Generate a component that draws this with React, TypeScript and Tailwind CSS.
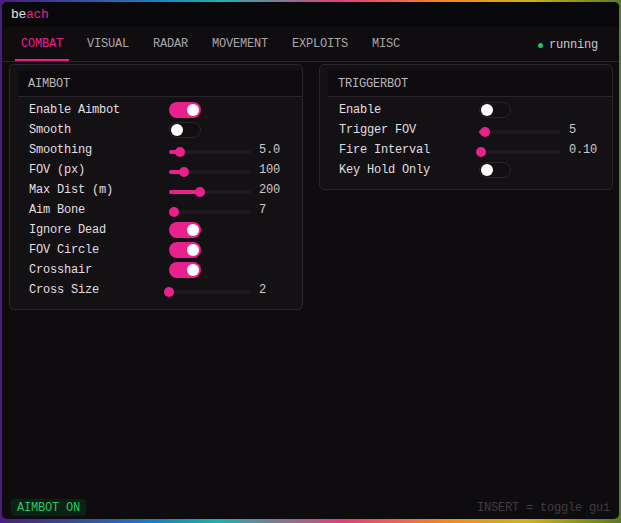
import React from "react";

const PINK = "bg-[#e9218c]";

function Toggle({ on }: { on: boolean }) {
  return on ? (
    <div className={`relative w-[32px] h-[16px] rounded-full ${PINK}`}>
      <div className="absolute right-[2px] top-[2px] w-[12px] h-[12px] rounded-full bg-white" />
    </div>
  ) : (
    <div className="relative w-[32px] h-[16px] rounded-full bg-[#120e12] border border-[#2a252a]">
      <div className="absolute left-[1px] top-[1px] w-[12px] h-[12px] rounded-full bg-white" />
    </div>
  );
}

function Slider({ pct, value }: { pct: number; value: string }) {
  return (
    <div className="flex items-center">
      <div className="relative w-[82px] h-[4px] mt-[4px] rounded-full bg-[#1d191d]">
        <div className={`absolute left-0 top-0 h-[4px] rounded-full ${PINK}`} style={{ width: `${pct * 82}px` }} />
        <div
          className={`absolute top-[-3px] w-[10px] h-[10px] rounded-full ${PINK}`}
          style={{ left: `${pct * 82 - 5}px` }}
        />
      </div>
      <span className="ml-[8px] text-[#cdc9cd]">{value}</span>
    </div>
  );
}

type Row =
  | { label: string; kind: "toggle"; on: boolean }
  | { label: string; kind: "slider"; pct: number; value: string };

function Panel({ title, rows, pb }: { title: string; rows: Row[]; pb: string }) {
  return (
    <div className={`rounded-[5px] border border-[#29252a] bg-[#141114] pt-[6px] ${pb}`}>
      <div className="ml-[8px] h-[26px] flex items-center pl-[10px] bg-[#0d0b0d] border-b border-[#29252a] text-[#bbb6bb]">
        {title}
      </div>
      <div className="pt-[3px] pl-[19px]">
        {rows.map((r) => (
          <div key={r.label} className="h-[20px] flex items-center">
            <div className="w-[140px] text-[#e2dfe2]">{r.label}</div>
            {r.kind === "toggle" ? <Toggle on={r.on} /> : <Slider pct={r.pct} value={r.value} />}
          </div>
        ))}
      </div>
    </div>
  );
}

const aimbot: Row[] = [
  { label: "Enable Aimbot", kind: "toggle", on: true },
  { label: "Smooth", kind: "toggle", on: false },
  { label: "Smoothing", kind: "slider", pct: 0.134, value: "5.0" },
  { label: "FOV (px)", kind: "slider", pct: 0.18, value: "100" },
  { label: "Max Dist (m)", kind: "slider", pct: 0.38, value: "200" },
  { label: "Aim Bone", kind: "slider", pct: 0.065, value: "7" },
  { label: "Ignore Dead", kind: "toggle", on: true },
  { label: "FOV Circle", kind: "toggle", on: true },
  { label: "Crosshair", kind: "toggle", on: true },
  { label: "Cross Size", kind: "slider", pct: 0, value: "2" },
];

const trigger: Row[] = [
  { label: "Enable", kind: "toggle", on: false },
  { label: "Trigger FOV", kind: "slider", pct: 0.073, value: "5" },
  { label: "Fire Interval", kind: "slider", pct: 0.024, value: "0.10" },
  { label: "Key Hold Only", kind: "toggle", on: false },
];

const tabs = ["COMBAT", "VISUAL", "RADAR", "MOVEMENT", "EXPLOITS", "MISC"];

export default function App() {
  return (
    <div className="w-[621px] h-[523px] pt-[2px] pl-[2px] pr-[2px] pb-[4px] bg-[linear-gradient(90deg,#4a1d7c,#1d7fc4_25%,#20b0b0_35%,#e0407a_55%,#f08a24_72%,#d4b01c_85%,#5a7a20)] font-['Liberation_Mono',monospace] text-[12px] tracking-[-0.2px] leading-none">
      <div className="h-full flex flex-col rounded-[5px] overflow-hidden bg-[#0f0c0f]">
        <div className="h-[25px] shrink-0 flex items-center pl-[9px] bg-[#09080b] text-[13px] tracking-[-0.3px]">
          <span className="text-[#e6e3e6]">be</span>
          <span className="text-[#e9218c]">ach</span>
        </div>
        <div className="h-[35px] shrink-0 flex items-stretch bg-[#100d10] border-b border-[#29252a] pl-[13px] pr-[21px]">
          <div className="flex items-stretch gap-[12px]">
            {tabs.map((t, i) => (
              <div
                key={t}
                className={
                  i === 0
                    ? "px-[6px] flex items-center border-b-2 border-[#e9218c] pt-[2px] text-[#e9218c]"
                    : "px-[6px] flex items-center border-b-2 border-transparent pt-[2px] text-[#a9a4a9]"
                }
              >
                {t}
              </div>
            ))}
          </div>
          <div className="ml-auto flex items-center gap-[6px] pt-[2px]">
            <div className="w-[5px] h-[5px] rounded-full bg-[#22c55e]" />
            <span className="text-[#c9c5c9]">running</span>
          </div>
        </div>
        <div className="flex-1 grid grid-cols-2 gap-[16px] items-start pt-[2px] pl-[7px] pr-[6px]">
          <Panel title="AIMBOT" rows={aimbot} pb="pb-[9px]" />
          <Panel title="TRIGGERBOT" rows={trigger} pb="pb-[9px]" />
        </div>
        <div className="shrink-0 flex items-center justify-between pl-[9px] pr-[9px] pb-[3px]">
          <div className="h-[17px] px-[6px] flex items-center rounded-[4px] bg-[#0d2016] text-[#27c964]">AIMBOT ON</div>
          <div className="text-[#3f3b40]">INSERT = toggle gui</div>
        </div>
      </div>
    </div>
  );
}
